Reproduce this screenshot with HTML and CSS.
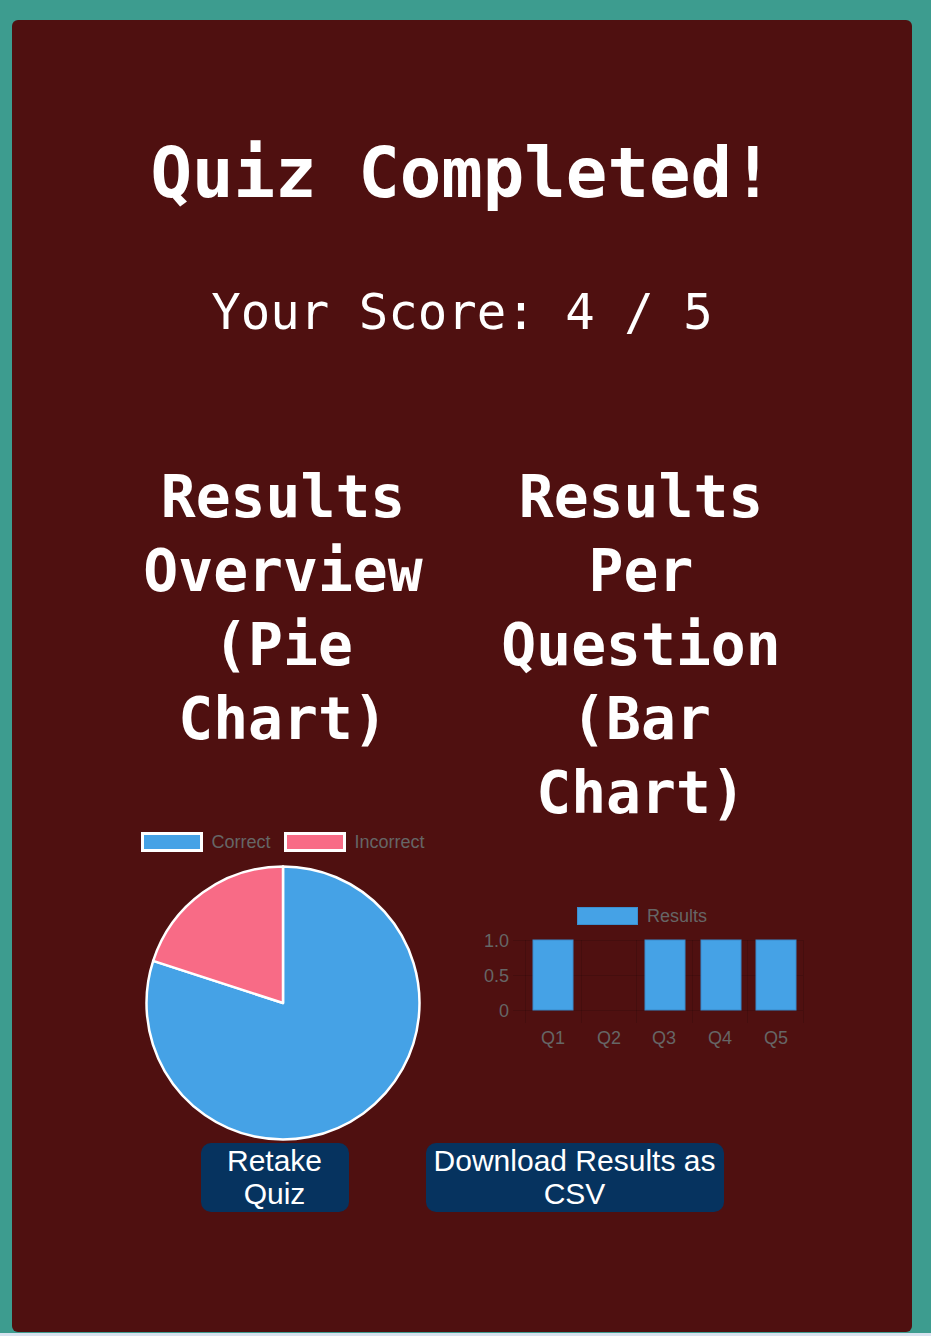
FILE: index.html
```html
<!DOCTYPE html>
<html lang="en">
<head>
<meta charset="utf-8">
<title>Quiz Completed</title>
<link rel="stylesheet" href="styles.css">
</head>
<body>
<main class="card">
  <h1 class="title">Quiz Completed!</h1>
  <p class="score">Your Score: 4 / 5</p>
  <div class="charts">
    <section class="chart-col">
      <h2 class="chart-title">Results Overview (Pie Chart)</h2>
      <div class="pie-legend">
        <span class="legend-item"><span class="swatch swatch-blue"></span><span class="legend-label">Correct</span></span>
        <span class="legend-item"><span class="swatch swatch-pink"></span><span class="legend-label">Incorrect</span></span>
      </div>
      <svg class="pie" width="280" height="280" viewBox="0 0 280 280">
        <path d="M140 140 L140 3.5 A136.5 136.5 0 1 1 10.18 97.82 Z" fill="#45a2e6" stroke="#fff" stroke-width="2.5" stroke-linejoin="round"/>
        <path d="M140 140 L10.18 97.82 A136.5 136.5 0 0 1 140 3.5 Z" fill="#f86b86" stroke="#fff" stroke-width="2.5" stroke-linejoin="round"/>
      </svg>
    </section>
    <section class="chart-col">
      <h2 class="chart-title">Results Per Question (Bar Chart)</h2>
      <svg class="bars" width="340" height="150" viewBox="0 0 340 150">
        <rect x="106.5" y="7.5" width="60" height="17" fill="#45a2e6" stroke="#3b8fd0" stroke-width="1"/>
        <text x="176" y="21.5" class="axis-text">Results</text>
        <g stroke="rgba(0,0,0,0.12)" stroke-width="1">
          <line x1="42" y1="40.5" x2="332" y2="40.5"/>
          <line x1="42" y1="75.5" x2="332" y2="75.5"/>
          <line x1="42" y1="110.5" x2="332" y2="110.5"/>
          <line x1="54.5" y1="40" x2="54.5" y2="123"/>
          <line x1="110.5" y1="40" x2="110.5" y2="123"/>
          <line x1="165.5" y1="40" x2="165.5" y2="123"/>
          <line x1="221.5" y1="40" x2="221.5" y2="123"/>
          <line x1="276.5" y1="40" x2="276.5" y2="123"/>
          <line x1="332.5" y1="40" x2="332.5" y2="123"/>
        </g>
        <text x="38" y="46.5" text-anchor="end" class="axis-text">1.0</text>
        <text x="38" y="81.5" text-anchor="end" class="axis-text">0.5</text>
        <text x="38" y="116.5" text-anchor="end" class="axis-text">0</text>
        <g fill="#45a2e6" stroke="#3a8acb" stroke-width="1">
          <rect x="62" y="40" width="40" height="70"/>
          <rect x="174" y="40" width="40" height="70"/>
          <rect x="230" y="40" width="40" height="70"/>
          <rect x="285" y="40" width="40" height="70"/>
        </g>
        <text x="82" y="143.5" text-anchor="middle" class="axis-text">Q1</text>
        <text x="138" y="143.5" text-anchor="middle" class="axis-text">Q2</text>
        <text x="193" y="143.5" text-anchor="middle" class="axis-text">Q3</text>
        <text x="249" y="143.5" text-anchor="middle" class="axis-text">Q4</text>
        <text x="305" y="143.5" text-anchor="middle" class="axis-text">Q5</text>
      </svg>
    </section>
  </div>
  <div class="actions">
    <button class="btn btn-retake" type="button">Retake Quiz</button>
    <button class="btn btn-download" type="button">Download Results as CSV</button>
  </div>
</main>
</body>
</html>
```

FILE: styles.css
```css
html {
  background: #d9e2ef;
}

body {
  margin: 0;
  padding: 20px 0 1px;
  background: #3d9c8f;
  font-family: "DejaVu Sans Mono", monospace;
}

.card {
  box-sizing: border-box;
  width: 900px;
  margin-left: 12px;
  padding: 112px 0 120px;
  background: #4f1010;
  border-radius: 6px;
  color: #fff;
  text-align: center;
}

.title {
  margin: 0;
  font-size: 69px;
  line-height: 82px;
  font-weight: bold;
}

.score {
  margin: 70px 0 0;
  font-size: 49px;
  line-height: 58px;
}

.charts {
  width: 698px;
  margin: 118px auto 0;
  display: flex;
  gap: 18px;
  align-items: flex-start;
}

.chart-col {
  flex: 1 1 0;
  display: flex;
  flex-direction: column;
  align-items: center;
}

.chart-title {
  margin: 0;
  font-size: 58px;
  line-height: 74px;
  font-weight: bold;
}

.pie-legend {
  margin-top: 76px;
  height: 20px;
  display: flex;
  align-items: center;
  gap: 14px;
  font-family: "Liberation Sans", Arial, sans-serif;
  font-size: 18px;
  color: #666;
}

.legend-item {
  display: flex;
  align-items: center;
  gap: 8px;
}

.swatch {
  box-sizing: border-box;
  width: 62px;
  height: 20px;
  border: 3px solid #fff;
}

.swatch-blue {
  background: #45a2e6;
}

.swatch-pink {
  background: #f86b86;
}

.pie {
  display: block;
  margin-top: 11px;
}

.bars {
  display: block;
  margin-top: 70px;
}

.axis-text {
  font-family: "Liberation Sans", Arial, sans-serif;
  font-size: 18px;
  fill: #666;
}

.actions {
  display: flex;
  justify-content: center;
  gap: 77px;
}

.btn {
  box-sizing: border-box;
  min-height: 69px;
  padding: 0 8px 1px;
  border: none;
  border-radius: 10px;
  background: #06335f;
  color: #fff;
  font-family: "Liberation Sans", Arial, sans-serif;
  font-size: 30px;
  line-height: 33px;
  text-align: center;
}

.btn-retake {
  width: 148px;
}

.btn-download {
  width: 298px;
}
```
